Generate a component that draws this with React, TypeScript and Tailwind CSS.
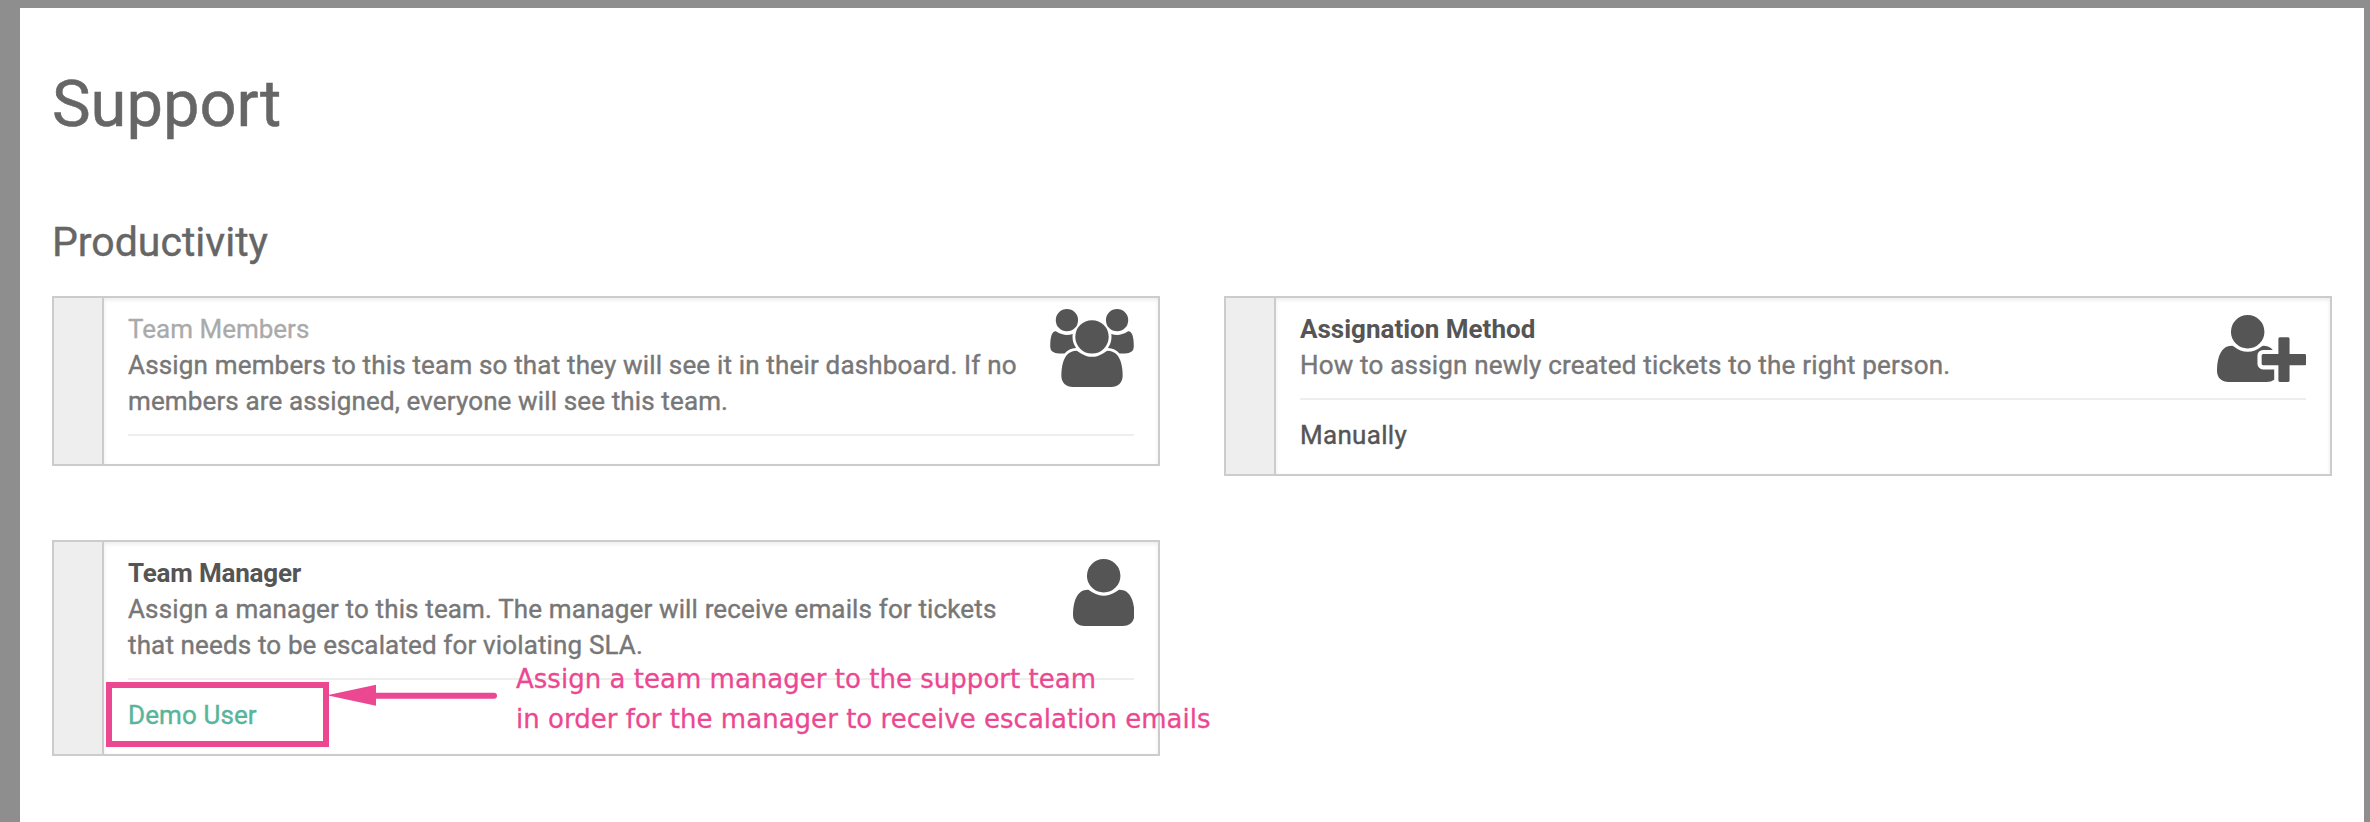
import type { ReactNode } from "react";

type IconProps = { viewBox: string; d: string; className: string };

function Icon({ viewBox, d, className }: IconProps) {
  return (
    <svg viewBox={viewBox} className={`shrink-0 fill-current ${className}`} aria-hidden="true">
      <path d={d} />
    </svg>
  );
}

const USERS =
  "M593 896q-162 5-265 128h-134q-82 0-138-40.5t-56-118.5q0-353 124-353 6 0 43.5 21t97.5 42.5 119 21.5q67 0 133-23-5 37-5 66 0 139 81 256zm1071 637q0 120-73 189.5t-194 69.5h-874q-121 0-194-69.5t-73-189.5q0-53 3.5-103.5t14-109 26.5-108.5 43-97.5 62-81 85.5-53.5 111.5-20q10 0 43 21.5t73 48 107 48 135 21.5 135-21.5 107-48 73-48 43-21.5q61 0 111.5 20t85.5 53.5 62 81 43 97.5 26.5 108.5 14 109 3.5 103.5zm-1024-1277q0 106-75 181t-181 75-181-75-75-181 75-181 181-75 181 75 75 181zm704 384q0 159-112.5 271.5t-271.5 112.5-271.5-112.5-112.5-271.5 112.5-271.5 271.5-112.5 271.5 112.5 112.5 271.5zm576 225q0 78-56 118.5t-138 40.5h-134q-103-123-265-128 81-117 81-256 0-29-5-66 66 23 133 23 59 0 119-21.5t97.5-42.5 43.5-21q124 0 124 353zm-128-609q0 106-75 181t-181 75-181-75-75-181 75-181 181-75 181 75 75 181z";
const USER =
  "M1600 1405q0 120-73 189.5t-194 69.5h-874q-121 0-194-69.5t-73-189.5q0-53 3.5-103.5t14-109 26.5-108.5 43-97.5 62-81 85.5-53.5 111.5-20q9 0 42 21.5t74.5 48 108 48 133.5 21.5 133.5-21.5 108-48 74.5-48 42-21.5q61 0 111.5 20t85.5 53.5 62 81 43 97.5 26.5 108.5 14 109 3.5 103.5zm-320-893q0 159-112.5 271.5t-271.5 112.5-271.5-112.5-112.5-271.5 112.5-271.5 271.5-112.5 271.5 112.5 112.5 271.5z";
const USER_PLUS =
  "M704 896q-159 0-271.5-112.5t-112.5-271.5 112.5-271.5 271.5-112.5 271.5 112.5 112.5 271.5-112.5 271.5-271.5 112.5zm960 128h352q13 0 22.5 9.5t9.5 22.5v192q0 13-9.5 22.5t-22.5 9.5h-352v352q0 13-9.5 22.5t-22.5 9.5h-192q-13 0-22.5-9.5t-9.5-22.5v-352h-352q-13 0-22.5-9.5t-9.5-22.5v-192q0-13 9.5-22.5t22.5-9.5h352v-352q0-13 9.5-22.5t22.5-9.5h192q13 0 22.5 9.5t9.5 22.5v352zm-736 224q0 52 38 90t90 38h256v238q-68 50-171 50h-874q-121 0-194-69t-73-190q0-53 3.5-103.5t14-109 26.5-108.5 43-97.5 62-81 85.5-53.5 111.5-20q19 0 39 17 79 61 154.5 91.5t164.5 30.5 164.5-30.5 154.5-91.5q20-17 39-17 132 0 217 96h-223q-52 0-90 38t-38 90v192z";

type CardProps = { title: ReactNode; description: ReactNode; icon: ReactNode; value?: ReactNode };

function SettingCard({ title, description, icon, value }: CardProps) {
  return (
    <section className="flex w-[1108px] border-2 border-[#cccccc] text-[26px] leading-9">
      <div className="w-12 shrink-0 bg-[#eeeeee]" />
      <div className="flex-1 border-l-2 border-[#cccccc] pr-6 pl-6 shadow-[inset_0_2px_4px_rgba(0,0,0,0.08)]">
        <div className="flex justify-between border-b-2 border-[#eeeeee] pt-[13px] pb-[15px]">
          <div className="whitespace-nowrap">
            <h3>{title}</h3>
            <p className="text-[#777777] [-webkit-text-stroke:0.4px_#777777]">{description}</p>
          </div>
          <div className="h-0 text-[#555555]">{icon}</div>
        </div>
        {value ? (
          <p className="pt-[17px] pb-[21px] [-webkit-text-stroke:0.4px]">{value}</p>
        ) : (
          <div className="h-7" />
        )}
      </div>
    </section>
  );
}

function Annotation() {
  return (
    <div className="absolute top-[142px] left-[54px] text-[#ec4892]">
      <div className="h-[65px] w-[223px] border-6 border-[#ec4892]" />
      <svg className="absolute top-0 left-[221px] h-[28px] w-[176px]" viewBox="0 0 176 28" aria-hidden="true">
        <path d="M0 13.3 49 2.8V23.8Z" className="fill-[#ec4892]" />
        <path d="M46 13.7H167" className="stroke-[#ec4892]" strokeWidth="6" strokeLinecap="round" />
      </svg>
      <p className="absolute top-[-23px] left-[410px] font-['DejaVu_Sans',sans-serif] text-[26px] leading-10 tracking-[0.02px] whitespace-nowrap [-webkit-text-stroke:0.3px]">
        Assign a team manager to the support team
        <br />
        in order for the manager to receive escalation emails
      </p>
    </div>
  );
}

export default function App() {
  return (
    <div className="flex h-[822px] w-[2370px] bg-[#8e8e8e] pt-2 pr-1.5 pl-5 font-[Roboto,sans-serif] text-[#555555] antialiased">
      <main className="flex-1 bg-white pt-14 pl-8">
        <h1 className="text-[65px] leading-[80px] text-[#666666] [-webkit-text-stroke:0.5px]">Support</h1>
        <h2 className="mt-[74px] mb-[30px] text-[41px] leading-[48px] text-[#666666] [-webkit-text-stroke:0.4px]">
          Productivity
        </h2>
        <div className="flex items-start gap-16">
          <div className="flex flex-col gap-[74px]">
            <SettingCard
              title={<span className="text-[#aaaaaa] [-webkit-text-stroke:0.3px]">Team Members</span>}
              description={
                <>
                  <span className="tracking-[0.17px]">
                    Assign members to this team so that they will see it in their dashboard. If no
                  </span>
                  <br />
                  <span className="tracking-[0.13px]">members are assigned, everyone will see this team.</span>
                </>
              }
              icon={<Icon viewBox="0 0 1920 1792" d={USERS} className="mt-[-2px] h-[78px] w-[84px]" />}
            />
            <div className="relative">
              <SettingCard
                title={<span className="font-bold tracking-[-0.2px]">Team Manager</span>}
                description={
                  <span className="tracking-[0.14px]">
                    Assign a manager to this team. The manager will receive emails for tickets
                    <br />
                    that needs to be escalated for violating SLA.
                  </span>
                }
                icon={<Icon viewBox="192 128 1408 1536" d={USER} className="mt-[3.5px] h-[67px] w-[61.4px]" />}
                value={<span className="tracking-[0.1px] text-[#58b59b]">Demo User</span>}
              />
              <Annotation />
            </div>
          </div>
          <SettingCard
            title={<span className="font-bold">Assignation Method</span>}
            description={
              <span className="tracking-[0.19px]">How to assign newly created tickets to the right person.</span>
            }
            icon={<Icon viewBox="0 128 2048 1536" d={USER_PLUS} className="mt-[3.5px] h-[67px] w-[89.3px]" />}
            value={<span className="tracking-[0.3px]">Manually</span>}
          />
        </div>
      </main>
    </div>
  );
}
